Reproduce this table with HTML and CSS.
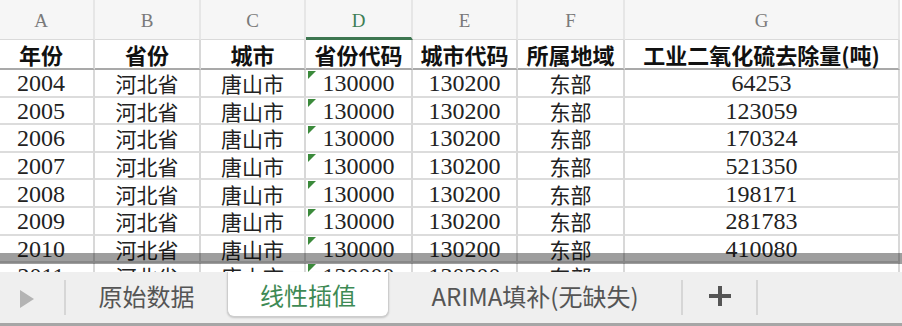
FILE: index.html
```html
<!DOCTYPE html>
<html lang="zh">
<head>
<meta charset="utf-8">
<link rel="stylesheet" href="styles.css">
</head>
<body>
<div class="sheet">
  <div class="grid">
    <div class="ch c-a">A</div>
    <div class="ch">B</div>
    <div class="ch">C</div>
    <div class="ch ch-sel">D</div>
    <div class="ch">E</div>
    <div class="ch">F</div>
    <div class="ch">G</div>

    <div class="th c-a">年份</div>
    <div class="th">省份</div>
    <div class="th">城市</div>
    <div class="th">省份代码</div>
    <div class="th">城市代码</div>
    <div class="th">所属地域</div>
    <div class="th">工业二氧化硫去除量(吨)</div>

    <div class="td c-a num">2004</div><div class="td">河北省</div><div class="td">唐山市</div><div class="td num flag">130000</div><div class="td num">130200</div><div class="td">东部</div><div class="td num">64253</div>
    <div class="td c-a num">2005</div><div class="td">河北省</div><div class="td">唐山市</div><div class="td num flag">130000</div><div class="td num">130200</div><div class="td">东部</div><div class="td num">123059</div>
    <div class="td c-a num">2006</div><div class="td">河北省</div><div class="td">唐山市</div><div class="td num flag">130000</div><div class="td num">130200</div><div class="td">东部</div><div class="td num">170324</div>
    <div class="td c-a num">2007</div><div class="td">河北省</div><div class="td">唐山市</div><div class="td num flag">130000</div><div class="td num">130200</div><div class="td">东部</div><div class="td num">521350</div>
    <div class="td c-a num">2008</div><div class="td">河北省</div><div class="td">唐山市</div><div class="td num flag">130000</div><div class="td num">130200</div><div class="td">东部</div><div class="td num">198171</div>
    <div class="td c-a num">2009</div><div class="td">河北省</div><div class="td">唐山市</div><div class="td num flag">130000</div><div class="td num">130200</div><div class="td">东部</div><div class="td num">281783</div>
    <div class="td c-a num">2010</div><div class="td">河北省</div><div class="td">唐山市</div><div class="td num flag">130000</div><div class="td num">130200</div><div class="td">东部</div><div class="td num">410080</div>
    <div class="td c-a num">2011</div><div class="td">河北省</div><div class="td">唐山市</div><div class="td num flag">130000</div><div class="td num">130200</div><div class="td">东部</div><div class="td num"></div>
  </div>

  <div class="split-bar"></div>

  <div class="tabs">
    <div class="tab-nav">
      <svg class="nav-arrow" width="14" height="18" viewBox="0 0 14 18"><polygon points="0,0 14,9 0,18" fill="#b4b4b4"/></svg>
    </div>
    <span class="sep"></span>
    <div class="tab tab-1">原始数据</div>
    <div class="tab tab-active">线性插值</div>
    <div class="tab tab-3">ARIMA填补(无缺失)</div>
    <span class="sep"></span>
    <div class="tab tab-add">
      <svg width="22" height="20" viewBox="0 0 22 20"><rect x="0" y="8" width="22" height="4" fill="#555"/><rect x="9" y="0" width="4" height="20" fill="#555"/></svg>
    </div>
    <span class="sep"></span>
  </div>
</div>
</body>
</html>
```

FILE: styles.css
```css
* {
  box-sizing: border-box;
}

html, body {
  margin: 0;
  padding: 0;
  background: #ffffff;
}

.sheet {
  position: relative;
  width: 902px;
  height: 326px;
  overflow: hidden;
  display: flex;
  flex-direction: column;
}

.grid {
  height: 272px;
  overflow: hidden;
  display: grid;
  grid-template-columns: 95px 106px 105px 107px 105px 107px 275px;
  grid-template-rows: 40px 30px repeat(8, 27.6px);
  flex: none;
}

.ch {
  background: #f6f6f6;
  border-right: 2px solid #e6e6e6;
  border-bottom: 1px solid #dadada;
  display: flex;
  align-items: center;
  justify-content: center;
  font-family: "Liberation Serif", "DejaVu Serif", serif;
  font-size: 19px;
  color: #7a7a7a;
  padding-top: 2px;
}

.ch-sel {
  color: #3f7f55;
  border-bottom: 3px solid #3d7650;
  padding-top: 4px;
}

.th {
  border-right: 2px solid #d8d8d8;
  border-bottom: 2px solid #a9a9a9;
  display: flex;
  align-items: center;
  justify-content: center;
  font-family: "Noto Sans CJK SC", sans-serif;
  font-weight: 700;
  font-size: 22px;
  color: #111;
  white-space: nowrap;
}

.td {
  position: relative;
  border-right: 2px solid #d8d8d8;
  border-bottom: 2px solid #dcdcdc;
  display: flex;
  align-items: center;
  justify-content: center;
  font-family: "Noto Sans CJK SC", sans-serif;
  font-size: 21px;
  color: #222;
  white-space: nowrap;
  padding-top: 1px;
}

.td.num {
  font-family: "Liberation Serif", "DejaVu Serif", serif;
  font-size: 24px;
  padding-top: 2px;
}

.c-a {
  padding-right: 11px;
}

.flag::before {
  content: "";
  position: absolute;
  top: 1px;
  left: 2px;
  width: 0;
  height: 0;
  border-top: 8px solid #3b8a3b;
  border-right: 8px solid transparent;
}

.split-bar {
  position: absolute;
  left: 0;
  top: 253px;
  width: 902px;
  height: 11px;
  background: rgba(0, 0, 0, 0.38);
}

.tabs {
  flex: 1;
  display: flex;
  align-items: stretch;
  background: #efefef;
  border-bottom: 3px solid #a6a6a6;
  font-family: "Noto Sans CJK SC", sans-serif;
  font-size: 24px;
  color: #555;
}

.tab-nav {
  width: 64px;
  display: flex;
  align-items: center;
  padding-left: 20px;
  padding-top: 3px;
}

.sep {
  width: 2px;
  height: 35px;
  margin-top: 8px;
  background: #d6d6d6;
}

.tab {
  display: flex;
  align-items: center;
  justify-content: center;
  padding-bottom: 4px;
  white-space: nowrap;
}

.tab-1 {
  width: 161px;
}

.tab-active {
  width: 162px;
  height: 45px;
  background: #ffffff;
  color: #3e8a55;
  border: 1px solid #cdcdcd;
  border-top: none;
  border-radius: 0 0 7px 7px;
  box-shadow: 0 1px 2px rgba(0, 0, 0, 0.18);
  padding-bottom: 0;
}

.tab-3 {
  width: 292px;
}

.tab-add {
  width: 73px;
  padding-bottom: 3px;
}
```
